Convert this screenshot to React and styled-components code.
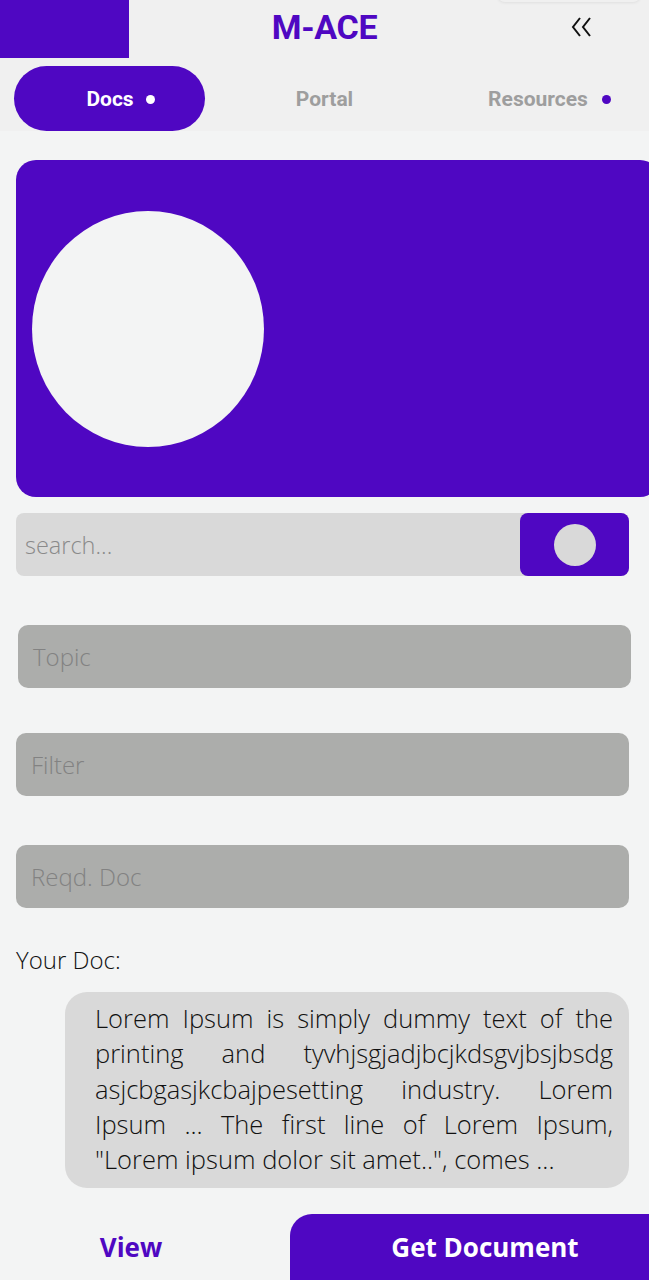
import React from "react";
import styled, { createGlobalStyle } from "styled-components";

const PURPLE = "#4f07c2";

const Global = createGlobalStyle`
  html, body { margin: 0; padding: 0; background: #f3f4f4; }
  body { overflow-x: hidden; }
  * { box-sizing: border-box; }
`;

const Page = styled.div`
  width: 649px;
  height: 1280px;
  overflow: hidden;
  position: relative;
  background: #f3f4f4;
  font-family: "Open Sans", "Liberation Sans", sans-serif;
  display: flex;
  flex-direction: column;
`;

const Header = styled.header`
  background: #f0f0f0;
  height: 131px;
  position: relative;
  font-family: Roboto, "Liberation Sans", sans-serif;
`;

const Ghost = styled.div`
  position: absolute;
  top: -44px;
  left: 497px;
  width: 144px;
  height: 46px;
  border-radius: 0 0 8px 8px;
  background: #f0f0f0;
  box-shadow: 0 1px 3px rgba(0, 0, 0, 0.07);
`;

const TopBar = styled.div`
  display: grid;
  grid-template-columns: 1fr auto 1fr;
  align-items: center;
  height: 58px;
`;

const Logo = styled.div`
  width: 129px;
  height: 58px;
  background: ${PURPLE};
`;

const Title = styled.h1`
  margin: 0;
  font-size: 34px;
  font-weight: 700;
  color: ${PURPLE};
  letter-spacing: -0.3px;
  line-height: 1;
  transform: translateY(-2px);
`;

const Collapse = styled.button`
  justify-self: end;
  margin-right: 56px;
  margin-top: -5px;
  width: 22px;
  height: 22px;
  padding: 0;
  border: 0;
  background: none;
  display: flex;
  align-items: center;
  justify-content: center;
`;

const Tabs = styled.nav`
  display: grid;
  grid-template-columns: 191px 1fr 191px;
  margin-top: 8px;
  padding: 0 14px;
  height: 65px;
`;

const Tab = styled.div`
  display: flex;
  align-items: center;
  justify-content: center;
  gap: ${(p) => p.$gap || 12}px;
  height: 65px;
  border-radius: 33px;
  padding-left: ${(p) => p.$offset || 0}px;
  background: ${(p) => (p.$active ? PURPLE : "transparent")};
  color: ${(p) => (p.$active ? "#ffffff" : "#9e9e9e")};
  font-size: 21px;
  font-weight: 700;
`;

const Dot = styled.span`
  width: 9px;
  height: 9px;
  border-radius: 50%;
  background: ${(p) => p.$color};
  margin-top: 1px;
`;

const Main = styled.main`
  flex: 1;
  display: flex;
  flex-direction: column;
  padding: 0 20px 0 16px;
`;

const Hero = styled.section`
  margin-top: 29px;
  margin-right: -31px;
  height: 337px;
  border-radius: 20px;
  background: ${PURPLE};
  display: flex;
  align-items: center;
  padding-left: 16px;
`;

const Avatar = styled.div`
  width: 232px;
  height: 236px;
  border-radius: 50%;
  background: #f3f4f4;
`;

const SearchRow = styled.div`
  margin-top: 16px;
  height: 63px;
  display: flex;
  border-radius: 8px;
  background: #d9d9d9;
`;

const SearchInput = styled.div`
  flex: 1;
  display: flex;
  align-items: center;
  padding-left: 9px;
  font-size: 23.5px;
  font-weight: 300;
  color: #8a8a8a;
`;

const SearchButton = styled.button`
  width: 109px;
  height: 63px;
  border: 0;
  border-radius: 8px;
  background: ${PURPLE};
  display: flex;
  align-items: center;
  justify-content: center;
  padding: 0;
`;

const Knob = styled.span`
  width: 42px;
  height: 42px;
  border-radius: 50%;
  background: #d9d9d9;
`;

const Field = styled.div`
  margin-top: ${(p) => p.$top}px;
  margin-left: ${(p) => p.$shift || 0}px;
  margin-right: ${(p) => -(p.$shift || 0)}px;
  height: 63px;
  border-radius: 10px;
  background: #acadab;
  display: flex;
  align-items: center;
  padding-left: 15px;
  font-size: 24px;
  font-weight: 300;
  color: #828282;
`;

const Label = styled.div`
  margin-top: 37px;
  font-size: 24px;
  font-weight: 300;
  color: #111;
  line-height: 30px;
`;

const DocBox = styled.div`
  margin-top: 17px;
  margin-left: 49px;
  border-radius: 22px;
  background: #d9d9d9;
  padding: 9px 16px 11px 30px;
  font-size: 25.5px;
  letter-spacing: 0;
  font-weight: 300;
  line-height: 35.3px;
  color: #111;
  text-align: justify;
`;

const BottomBar = styled.footer`
  margin-top: auto;
  height: 66px;
  display: grid;
  grid-template-columns: 290px 1fr;
  font-family: "Open Sans", "Liberation Sans", sans-serif;
  font-weight: 700;
  font-size: 26px;
`;

const ViewButton = styled.button`
  border: 0;
  background: none;
  color: ${PURPLE};
  font: inherit;
  padding: 0 28px 0 0;
  display: flex;
  align-items: center;
  justify-content: center;
`;

const GetButton = styled.button`
  border: 0;
  margin-right: -31px;
  border-radius: 22px 0 0 0;
  background: ${PURPLE};
  color: #fff;
  font: inherit;
  display: flex;
  align-items: center;
  justify-content: center;
  padding: 0;
`;

export default function App() {
  return (
    <>
      <Global />
      <Page>
        <Header>
          <Ghost />
          <TopBar>
            <Logo />
            <Title>M-ACE</Title>
            <Collapse aria-label="collapse">
              <svg width="22" height="22" viewBox="0 0 22 22" fill="none" stroke="#111" strokeWidth="2">
                <polyline points="9,2 2,11 9,20" />
                <polyline points="19,2 12,11 19,20" />
              </svg>
            </Collapse>
          </TopBar>
          <Tabs>
            <Tab $active $offset={22}>
              Docs <Dot $color="#ffffff" />
            </Tab>
            <Tab>Portal</Tab>
            <Tab $offset={20} $gap={14}>
              Resources <Dot $color={PURPLE} />
            </Tab>
          </Tabs>
        </Header>
        <Main>
          <Hero>
            <Avatar />
          </Hero>
          <SearchRow>
            <SearchInput>search...</SearchInput>
            <SearchButton aria-label="search">
              <Knob />
            </SearchButton>
          </SearchRow>
          <Field $top={49} $shift={2}>Topic</Field>
          <Field $top={45}>Filter</Field>
          <Field $top={49}>Reqd. Doc</Field>
          <Label>Your Doc:</Label>
          <DocBox>
            Lorem Ipsum is simply dummy text of the printing and tyvhjsgjadjbcjkdsgvjbsjbsdg
            asjcbgasjkcbajpesetting industry. Lorem Ipsum ... The first line of Lorem Ipsum,
            "Lorem ipsum dolor sit amet..", comes ...
          </DocBox>
        </Main>
        <BottomBar>
          <ViewButton>View</ViewButton>
          <GetButton>Get Document</GetButton>
        </BottomBar>
      </Page>
    </>
  );
}
